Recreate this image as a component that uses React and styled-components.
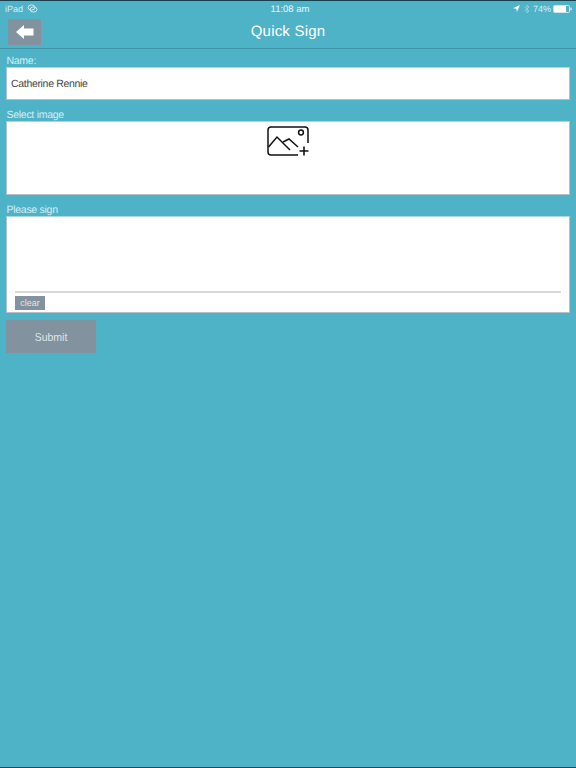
import React from "react";
import styled, { createGlobalStyle } from "styled-components";

const Global = createGlobalStyle`
  html, body { margin: 0; padding: 0; background: #4fb3c8; }
  * { box-sizing: border-box; }
`;
const Page = styled.div`
  width: 576px; height: 768px; overflow: hidden; background: #4fb3c8;
  border-top: 1px solid #17404d; border-bottom: 1px solid #17404d;
  font-family: "Liberation Sans", Arial, sans-serif; font-weight: 300;
  text-rendering: geometricPrecision;
  display: flex; flex-direction: column;
`;
const StatusBar = styled.div`
  height: 15px; padding: 0 4px 0 5px; display: grid; grid-template-columns: 1fr auto 1fr; align-items: center;
  font-size: 9px; color: #d5eef3;
`;
const StatusGroup = styled.div`
  display: flex; align-items: center; gap: 4px; justify-content: ${p => (p.$end ? "flex-end" : "flex-start")};
`;
const Clock = styled.div`font-size: 9.5px; color: #e8f6f9; padding: 1px 0 0 3px;`;
const BluetoothIcon = styled.svg`margin-right: -1px;`;
const BatteryIcon = styled.svg`margin-left: -2px;`;
const Header = styled.header`
  height: 33px; border-bottom: 1px solid #3f93a7; padding: 3px 0 0 8px; position: relative;
`;
const BackButton = styled.button`
  width: 33px; height: 26px; border: 0; padding: 0; background: #83929f;
  display: flex; align-items: center; justify-content: center;
`;
const Title = styled.h1`
  position: absolute; left: 0; right: 0; top: 6px; margin: 0; text-align: center;
  font-size: 15px; font-weight: 400; color: #fff; letter-spacing: 0.2px; line-height: 20px;
`;
const Form = styled.main`display: flex; flex-direction: column; padding: 5px 6px 0 6px;`;
const Label = styled.label`
  display: block; font-size: 10.5px; letter-spacing: -0.28px; line-height: 15px; color: #d3eff4; height: 13px; margin-left: 0.5px;
`;
const Box = styled.div`
  background: #fff; width: 564px; height: ${p => p.$h}px; margin-bottom: ${p => p.$mb}px;
  border: 1px solid #b4c0c6; border-top-color: #a9d8e2;
`;
const NameValue = styled.div`
  font-size: 10.5px; line-height: 32px; color: #444; padding-left: 4px; letter-spacing: -0.32px;
`;
const ImageBox = styled(Box)`display: flex; justify-content: center; padding-top: 4px;`;
const SignBox = styled(Box)`padding: 74px 8px 0 8px;`;
const SignLine = styled.div`height: 2px; background: #d9d9d9;`;
const ClearButton = styled.button`
  display: block; margin-top: 3px; width: 30px; height: 14px; border: 0; padding: 0; background: #83929f;
  color: #e1e6e9; font: 300 9px/14px "Liberation Sans", Arial, sans-serif;
`;
const SubmitButton = styled.button`
  width: 90px; height: 33px; border: 0; padding: 2px 0 0; background: #83929f;
  color: #dfe5e8; font: 300 10.5px/31px "Liberation Sans", Arial, sans-serif;
`;

export default function App() {
  return (
    <Page>
      <Global />
      <StatusBar>
        <StatusGroup>
          <span>iPad</span>
          <svg width="11" height="9" viewBox="0 0 11 9" fill="none" stroke="#cdebf1" strokeWidth="1">
            <ellipse cx="4.5" cy="3.5" rx="3.5" ry="2.6" />
            <ellipse cx="6.5" cy="5.5" rx="3.5" ry="2.6" />
          </svg>
        </StatusGroup>
        <Clock>11:08 am</Clock>
        <StatusGroup $end>
          <svg width="7" height="7" viewBox="0 0 7 7"><path d="M7 0 L0 3.2 L3.4 3.7 L3.8 7 Z" fill="#fff" /></svg>
          <BluetoothIcon width="6" height="10" viewBox="0 0 6 10" fill="none" stroke="#97d2de" strokeWidth="0.9">
            <path d="M0.5 2.8 L5 7 L3 9 V1 L5 3 L0.5 7.2" />
          </BluetoothIcon>
          <span>74%</span>
          <BatteryIcon width="19" height="8" viewBox="0 0 19 8">
            <rect x="0.5" y="0.5" width="16" height="7" rx="1" fill="none" stroke="#e5f5f8" strokeWidth="0.8" />
            <rect x="1" y="1" width="12" height="6" fill="#fff" />
            <rect x="17.4" y="2.7" width="1.2" height="2.6" fill="#e5f5f8" />
          </BatteryIcon>
        </StatusGroup>
      </StatusBar>
      <Header>
        <BackButton aria-label="Back">
          <svg width="18" height="14" viewBox="0 0 18 14"><path d="M0 7 L8 0 V3.5 H17.5 V10.5 H8 V14 Z" fill="#fff" /></svg>
        </BackButton>
        <Title>Quick Sign</Title>
      </Header>
      <Form>
        <Label>Name:</Label>
        <Box $h={33} $mb={8}><NameValue>Catherine Rennie</NameValue></Box>
        <Label>Select image</Label>
        <ImageBox $h={74} $mb={8}>
          <svg width="44" height="32" viewBox="0 0 44 32" fill="none" stroke="#111" strokeWidth="1.5">
            <path d="M42 17 V4 Q42 1 39 1 H5 Q2 1 2 4 V26 Q2 29 5 29 H32" />
            <circle cx="35" cy="6.5" r="2.4" />
            <path d="M2.5 21 L11 11 L24 24" />
            <path d="M17 16 L23 13 L32 21" />
            <path d="M38 20.5 V29.5 M33.5 25 H42.5" strokeWidth="1.6" />
          </svg>
        </ImageBox>
        <Label>Please sign</Label>
        <SignBox $h={97} $mb={7}>
          <SignLine />
          <ClearButton>clear</ClearButton>
        </SignBox>
        <div><SubmitButton>Submit</SubmitButton></div>
      </Form>
    </Page>
  );
}
